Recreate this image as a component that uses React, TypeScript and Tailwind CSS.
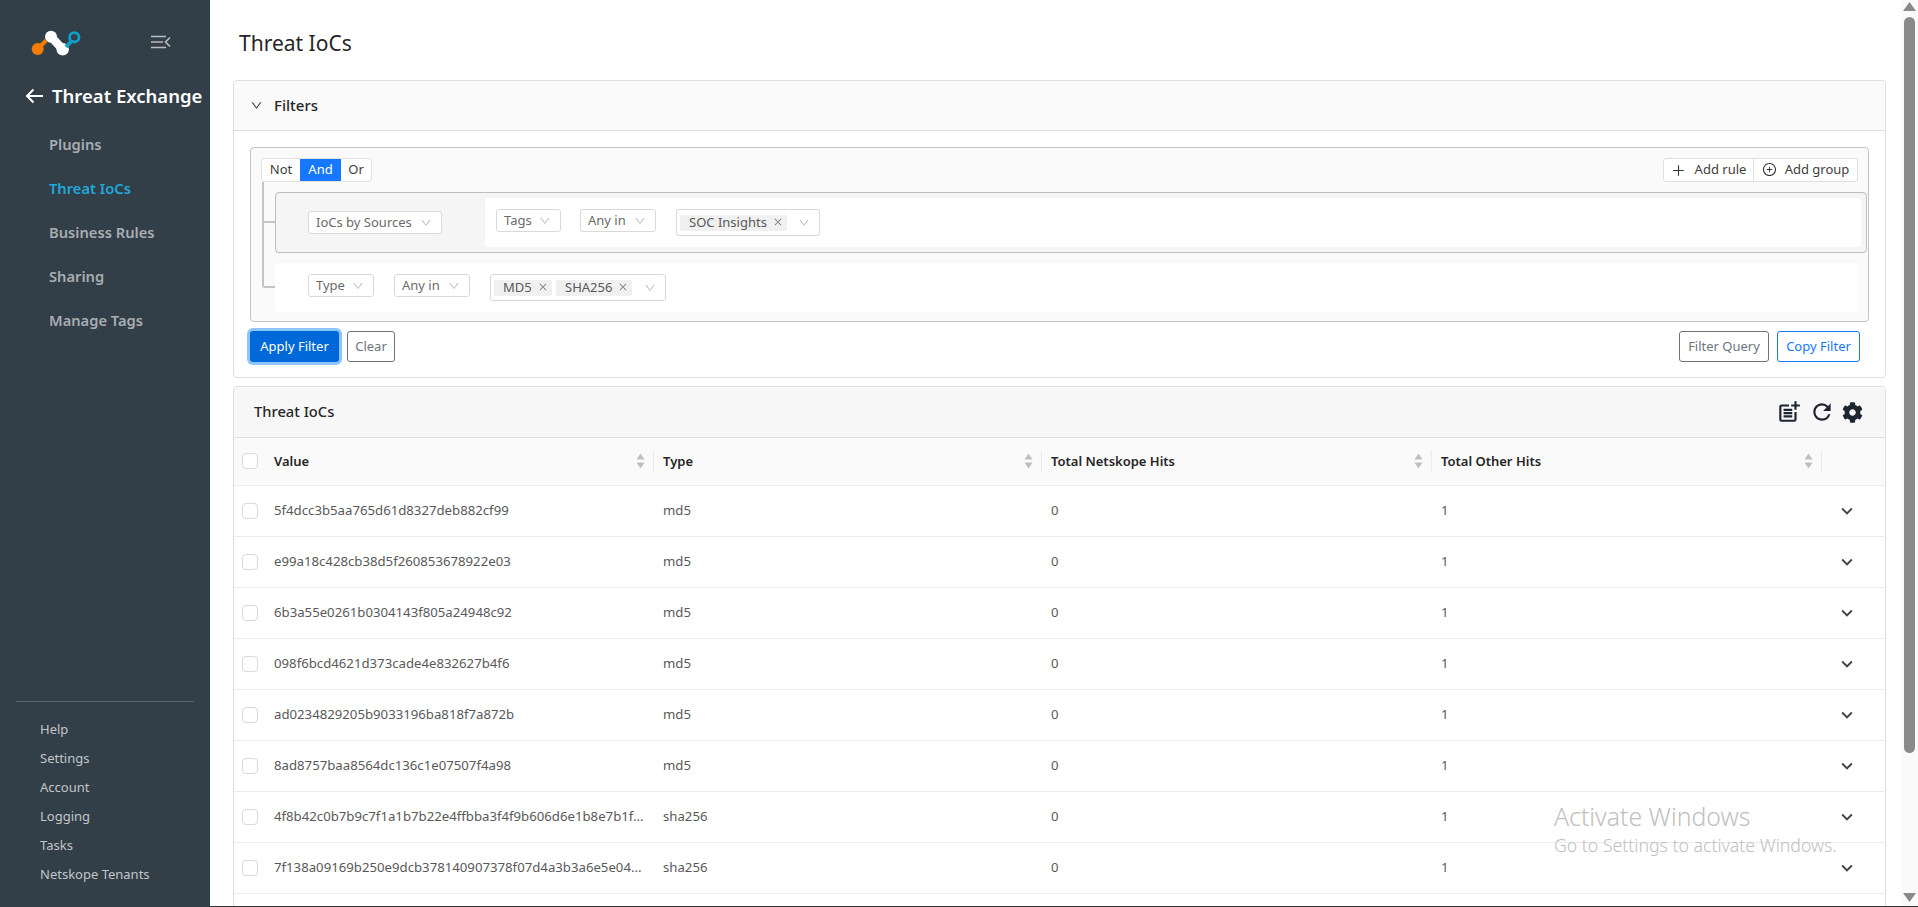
import { AiOutlineClose, AiOutlineDown, AiOutlinePlus, AiOutlinePlusCircle } from "react-icons/ai";
import { FaCog } from "react-icons/fa";
import { MdOutlinePostAdd, MdRefresh, MdKeyboardArrowDown } from "react-icons/md";

const rows: [string, string][] = [
  ["5f4dcc3b5aa765d61d8327deb882cf99", "md5"],
  ["e99a18c428cb38d5f260853678922e03", "md5"],
  ["6b3a55e0261b0304143f805a24948c92", "md5"],
  ["098f6bcd4621d373cade4e832627b4f6", "md5"],
  ["ad0234829205b9033196ba818f7a872b", "md5"],
  ["8ad8757baa8564dc136c1e07507f4a98", "md5"],
  ["4f8b42c0b7b9c7f1a1b7b22e4ffbba3f4f9b606d6e1b8e7b1f...", "sha256"],
  ["7f138a09169b250e9dcb378140907378f07d4a3b3a6e5e04...", "sha256"],
];

function Logo() {
  return (
    <svg width="52" height="32" viewBox="0 0 52 32" className="block">
      <path d="M6.7 23 L15 14.5" stroke="#f57c00" strokeWidth="4" />
      <circle cx="6.7" cy="23" r="6" fill="#f57c00" />
      <path d="M20 10.7 L31.7 23.3" stroke="#fff" strokeWidth="8.5" />
      <circle cx="20" cy="10.7" r="6" fill="#fff" />
      <circle cx="31.7" cy="23.3" r="6.2" fill="#fff" />
      <path d="M35 21 L40.5 15" stroke="#0ea0c8" strokeWidth="4" />
      <circle cx="43.3" cy="11.3" r="4.7" fill="none" stroke="#0ea0c8" strokeWidth="2.8" />
    </svg>
  );
}

function Select({ label, w }: { label: string; w: string }) {
  return (
    <div className={`${w} h-[23px] flex items-center justify-between pl-[7px] pr-[9px] bg-white border border-[#d9d9d9] rounded-[3px] text-[13px] text-[#6b6b6b] shrink-0 whitespace-nowrap`}>
      <span>{label}</span>
      <AiOutlineDown className="text-[#bfbfbf] text-[12px]" />
    </div>
  );
}

function Tag({ label, w }: { label: string; w: string }) {
  return (
    <span className={`${w} h-[16px] flex items-center justify-between pl-[9px] pr-[4px] bg-[#f0f0f0] rounded-[2px] text-[13px] text-[#595959] whitespace-nowrap`}>
      {label}
      <AiOutlineClose className="text-[#777] text-[10px] -mt-[2px]" />
    </span>
  );
}

function Multi({ tags, w }: { tags: [string, string][]; w: string }) {
  return (
    <div className={`${w} h-[27px] flex items-center gap-[4px] pl-[3px] pr-[9px] bg-white border border-[#d9d9d9] rounded-[3px] shrink-0`}>
      {tags.map(([t, tw]) => (
        <Tag key={t} label={t} w={tw} />
      ))}
      <AiOutlineDown className="ml-auto text-[#bfbfbf] text-[12px]" />
    </div>
  );
}

function SortHead({ label }: { label: string }) {
  return (
    <th className="relative px-[9px] text-left font-semibold text-[13px] text-[#262626]">
      {label}
      <svg width="9" height="16" viewBox="0 0 9 16" className="absolute right-[9px] top-1/2 -translate-y-1/2">
        <path d="M4.5 0.5 L8.5 6.5 H0.5 Z" fill="#bfbfbf" />
        <path d="M4.5 15.5 L8.5 9.5 H0.5 Z" fill="#bfbfbf" />
      </svg>
      <span className="absolute right-0 top-1/2 -translate-y-1/2 h-[22px] w-px bg-[#ececec]" />
    </th>
  );
}

function Box() {
  return <span className="block w-[16px] h-[16px] bg-white border border-[#d9d9d9] rounded-[4px]" />;
}

export default function App() {
  const font = { fontFamily: '"Noto Sans", "Open Sans", sans-serif' };
  return (
    <div style={font} className="relative flex h-[907px] w-[1918px] overflow-hidden bg-white">
      {/* Sidebar */}
      <aside className="w-[210px] shrink-0 h-full bg-[#323e48] flex flex-col">
        <div className="flex items-center h-[32px] mt-[26px] pl-[31px]">
          <Logo />
          <svg width="20" height="14" viewBox="0 0 20 14" className="ml-[68px]" fill="none" stroke="#bcbcbc" strokeWidth="1.6">
            <path d="M0 1.5 H15 M0 7 H12 M0 12.5 H15" />
            <path d="M19 2.5 L14.5 7 L19 11.5" />
          </svg>
        </div>
        <div className="flex items-center mt-[24px] pl-[25px] h-[28px]">
          <svg width="18" height="16" viewBox="0 0 18 16" fill="none" stroke="#fff" strokeWidth="2">
            <path d="M18 8 H2 M8.5 1.5 L2 8 L8.5 14.5" />
          </svg>
          <span className="ml-[9px] text-[18.5px] font-semibold text-white whitespace-nowrap">Threat Exchange</span>
        </div>
        <nav className="mt-[12px] pl-[49px] flex flex-col text-[14.7px] font-semibold text-[#a9adb0]">
          <a className="h-[44px] flex items-center">Plugins</a>
          <a className="h-[44px] flex items-center text-[#1fa8d8]">Threat IoCs</a>
          <a className="h-[44px] flex items-center">Business Rules</a>
          <a className="h-[44px] flex items-center">Sharing</a>
          <a className="h-[44px] flex items-center">Manage Tags</a>
        </nav>
        <div className="mt-auto mx-[16px] border-t border-[#5b6670] pt-[13px] pb-[18px] pl-[24px] flex flex-col text-[13px] text-[#c2c6c9]">
          {["Help", "Settings", "Account", "Logging", "Tasks", "Netskope Tenants"].map((t) => (
            <a key={t} className="h-[29px] flex items-center whitespace-nowrap">{t}</a>
          ))}
        </div>
      </aside>

      {/* Main */}
      <main className="flex-1 min-w-0 pl-[23px] pr-[15px] border-b border-[#333] overflow-hidden">
        <h1 className="h-[80px] pt-[8px] flex items-center pl-[6px] text-[21px] text-[#262626]">Threat IoCs</h1>

        {/* Filters */}
        <section className="border border-[#dedede] rounded-[4px] bg-white">
          <header className="h-[50px] flex items-center pl-[16px] bg-[#fafafa] border-b border-[#dedede] rounded-t-[4px]">
            <AiOutlineDown className="text-[#444] text-[13px]" />
            <span className="ml-[11px] text-[15px] font-medium text-[#262626]">Filters</span>
          </header>
          <div className="px-[16px] pt-[16px] pb-[15px]">
            <div className="relative h-[175px] bg-[#fafafa] border border-[#c4c4c4] rounded-[4px] pl-[10px] pr-[10px] pt-[10px]">
              {/* tree connector */}
              <span className="absolute left-[11px] top-[34px] w-[13px] h-[106px] border-l-2 border-b-2 border-[#c4c4c4] rounded-bl-[3px]" />
              <span className="absolute left-[11px] top-[73px] w-[13px] h-[2px] bg-[#c4c4c4]" />

              <div className="flex justify-between h-[24px] text-[13px]">
                <div className="flex rounded-[3px] border border-[#e4e4e4] bg-white text-[#404040]">
                  <span className="w-[38px] flex items-center justify-center">Not</span>
                  <span className="w-[41px] flex items-center justify-center bg-[#1677ff] text-white">And</span>
                  <span className="w-[30px] flex items-center justify-center">Or</span>
                </div>
                <div className="flex rounded-[3px] border border-[#e0e0e0] bg-white text-[#404040]">
                  <span className="w-[90px] flex items-center justify-center gap-[9px] border-r border-[#e0e0e0]">
                    <AiOutlinePlus className="text-[15px] text-[#333]" />
                    Add rule
                  </span>
                  <span className="w-[103px] flex items-center justify-center gap-[8px]">
                    <AiOutlinePlusCircle className="text-[15px] text-[#333] -mt-[2px]" />
                    Add group
                  </span>
                </div>
              </div>

              {/* Rule group one */}
              <div className="relative mt-[10px] ml-[14px] -mr-[9px] h-[61px] flex items-center pl-[32px] pr-[5px] bg-[#f5f5f5] border border-[#bdbdbd] rounded-[4px]">
                <Select label="IoCs by Sources" w="w-[134px]" />
                <div className="ml-[43px] flex-1 h-[49px] flex items-start gap-[19px] pt-[11px] pl-[11px] bg-white rounded-[4px]">
                  <Select label="Tags" w="w-[65px]" />
                  <Select label="Any in" w="w-[76px]" />
                  <Multi tags={[["SOC Insights", "w-[107px]"]]} w="w-[144px] ml-px" />
                </div>
              </div>

              {/* Rule two */}
              <div className="mt-[10px] ml-[14px] h-[49px] flex items-start gap-[20px] pt-[11px] pl-[33px] bg-white rounded-[4px]">
                <Select label="Type" w="w-[66px]" />
                <Select label="Any in" w="w-[76px]" />
                <Multi tags={[["MD5", "w-[58px]"], ["SHA256", "w-[76px]"]]} w="w-[176px]" />
              </div>
            </div>

            <div className="mt-[9px] flex items-center text-[13px] h-[31px]">
              <button className="w-[89px] h-[31px] bg-[#0069d9] text-white rounded-[3px] ring-[3px] ring-[#8cc4fb]">Apply Filter</button>
              <button className="ml-[8px] w-[48px] h-[31px] text-[#6c757d] border border-[#6c757d] rounded-[3px]">Clear</button>
              <button className="ml-auto w-[90px] h-[31px] text-[#6c757d] border border-[#6c757d] rounded-[3px]">Filter Query</button>
              <button className="ml-[8px] mr-[9px] w-[83px] h-[31px] text-[#1677ff] border border-[#1677ff] rounded-[3px]">Copy Filter</button>
            </div>
          </div>
        </section>

        {/* Threat IoCs table */}
        <section className="mt-[8px] border border-[#dedede] rounded-t-[4px] bg-white">
          <header className="h-[51px] flex items-center pl-[20px] pr-[22px] bg-[#f7f7f7] border-b border-[#dedede] rounded-t-[4px]">
            <span className="text-[14.7px] font-medium text-[#262626] -mt-[2px]">Threat IoCs</span>
            <div className="ml-auto flex items-center gap-[7px] text-[#1d2530]">
              <MdOutlinePostAdd className="text-[26px]" />
              <MdRefresh className="text-[26px]" />
              <FaCog className="text-[21px]" />
            </div>
          </header>
          <table className="w-full table-fixed border-collapse">
            <colgroup>
              <col className="w-[31px]" />
              <col className="w-[389px]" />
              <col className="w-[388px]" />
              <col className="w-[390px]" />
              <col className="w-[390px]" />
              <col />
            </colgroup>
            <thead>
              <tr className="h-[47px] bg-[#fafafa] border-b border-[#ededed]">
                <th className="pl-[8px]"><Box /></th>
                <SortHead label="Value" />
                <SortHead label="Type" />
                <SortHead label="Total Netskope Hits" />
                <SortHead label="Total Other Hits" />
                <th />
              </tr>
            </thead>
            <tbody className="text-[13.2px] text-[#595959]">
              {rows.map(([v, t]) => (
                <tr key={v} className="h-[51px] border-b border-[#ededed]">
                  <td className="pl-[8px]"><Box /></td>
                  <td className="px-[9px] whitespace-nowrap">{v}</td>
                  <td className="px-[9px]">{t}</td>
                  <td className="px-[9px]">0</td>
                  <td className="px-[9px]">1</td>
                  <td className="text-center pr-[14px]"><MdKeyboardArrowDown className="inline text-[22px] text-[#444]" /></td>
                </tr>
              ))}
              <tr className="h-[51px]"><td colSpan={6} /></tr>
            </tbody>
          </table>
        </section>
      </main>

      {/* Scrollbar */}
      <div className="w-[17px] shrink-0 h-full bg-[#fafafa] flex flex-col items-center pt-[2px] border-b border-[#333]">
        <svg width="13" height="9" viewBox="0 0 13 9"><path d="M6.5 0 L13 9 H0 Z" fill="#8a8a8a" /></svg>
        <div className="mt-[6px] w-[11px] h-[736px] bg-[#8a8a8a] rounded-[6px]" />
        <svg width="13" height="9" viewBox="0 0 13 9" className="mt-auto mb-[4px]"><path d="M6.5 9 L13 0 H0 Z" fill="#8a8a8a" /></svg>
      </div>

      {/* Activation watermark */}
      <div className="absolute left-[1554px] top-[800px] text-[#c0c0c0] pointer-events-none font-light whitespace-nowrap">
        <div className="text-[24.8px] leading-[32px]">Activate Windows</div>
        <div className="text-[17.7px] leading-[22px] mt-[2px]">Go to Settings to activate Windows.</div>
      </div>
    </div>
  );
}
